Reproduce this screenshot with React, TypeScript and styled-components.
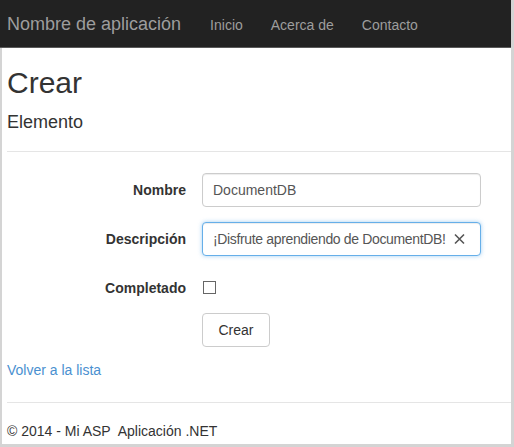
import React from 'react';
import styled, { createGlobalStyle } from 'styled-components';

const GlobalStyle = createGlobalStyle`
  html, body {
    margin: 0;
    padding: 0;
    background: #fff;
  }
  body {
    font-family: Arial, "Liberation Sans", sans-serif;
    font-size: 14px;
    color: #333;
  }
`;

const Frame = styled.div`
  width: 514px;
  height: 447px;
  box-sizing: border-box;
  border-right: 3px solid #d4d4d4;
  border-bottom: 3px solid #d4d4d4;
  display: flex;
  flex-direction: column;
  overflow: hidden;
`;

const Navbar = styled.nav`
  height: 48px;
  flex-shrink: 0;
  background: #222;
  border-bottom: 1px solid #5a5a5a;
  display: flex;
  align-items: center;
  padding: 2px 0 0 7px;
  box-sizing: border-box;
`;

const Brand = styled.a`
  font-size: 18px;
  color: #9d9d9d;
  text-decoration: none;
  padding-right: 15px;
`;

const NavLink = styled.a`
  font-size: 14px;
  color: #9d9d9d;
  text-decoration: none;
  padding: 0 14px;
`;

const Body = styled.div`
  flex: 1;
  border-left: 2px solid #d4d4d4;
  padding: 0 0 0 5px;
`;

const Title = styled.h2`
  font-size: 30px;
  font-weight: 400;
  line-height: 33px;
  margin: 18px 0 0;
`;

const Subtitle = styled.h4`
  font-size: 18px;
  font-weight: 400;
  line-height: 20px;
  margin: 13px 0 0;
`;

const Rule = styled.hr<{ $top: number }>`
  border: 0;
  border-top: 1px solid #e5e5e5;
  margin: ${p => p.$top}px 0 0;
`;

const Form = styled.form`
  display: grid;
  grid-template-columns: 179px 279px;
  column-gap: 16px;
  row-gap: 15px;
  align-items: center;
  margin-top: 21px;
`;

const Label = styled.label`
  font-weight: 700;
  text-align: right;
`;

const InputWrap = styled.div`
  position: relative;
`;

const Input = styled.input<{ $focused?: boolean }>`
  box-sizing: border-box;
  width: 100%;
  height: 34px;
  padding: 6px 30px 6px 10px;
  font-family: inherit;
  font-size: 14px;
  color: #555;
  letter-spacing: ${p => (p.$focused ? '-0.35px' : '0')};
  border: 1px solid ${p => (p.$focused ? '#66afe9' : '#ccc')};
  border-radius: 4px;
  box-shadow: ${p =>
    p.$focused
      ? 'inset 0 1px 1px rgba(0,0,0,.075), 0 0 4px rgba(102,175,233,.6)'
      : 'inset 0 1px 1px rgba(0,0,0,.075)'};
  outline: none;
`;

const Clear = styled.span`
  position: absolute;
  right: 16px;
  top: 50%;
  transform: translateY(-50%);
  display: flex;
`;

const CheckRow = styled.div`
  height: 33px;
  display: flex;
  align-items: center;
  padding-left: 1px;
`;

const Checkbox = styled.span`
  width: 11px;
  height: 11px;
  border: 1px solid #666;
`;

const ButtonCell = styled.div`
  grid-column: 2;
  margin-top: -6px;
`;

const Button = styled.button`
  height: 34px;
  padding: 0 12px;
  width: 68px;
  background: #fff;
  border: 1px solid #ccc;
  border-radius: 4px;
  font-family: inherit;
  font-size: 14px;
  color: #333;
`;

const BackLink = styled.a`
  display: block;
  margin-top: 15px;
  color: #4a90d0;
  text-decoration: none;
`;

const Footer = styled.footer`
  margin-top: 20px;
`;

const App: React.FC = () => {
  return (
    <>
      <GlobalStyle />
      <Frame>
        <Navbar>
          <Brand href="#">Nombre de aplicación</Brand>
          <NavLink href="#">Inicio</NavLink>
          <NavLink href="#">Acerca de</NavLink>
          <NavLink href="#">Contacto</NavLink>
        </Navbar>
        <Body>
          <Title>Crear</Title>
          <Subtitle>Elemento</Subtitle>
          <Rule $top={19} />
          <Form>
            <Label>Nombre</Label>
            <Input defaultValue="DocumentDB" />

            <Label>Descripción</Label>
            <InputWrap>
              <Input $focused defaultValue="¡Disfrute aprendiendo de DocumentDB!" />
              <Clear>
                <svg width="11" height="11" viewBox="0 0 11 11">
                  <path d="M1 1L10 10M10 1L1 10" stroke="#555" strokeWidth="1.6" />
                </svg>
              </Clear>
            </InputWrap>

            <Label>Completado</Label>
            <CheckRow>
              <Checkbox />
            </CheckRow>

            <ButtonCell>
              <Button type="button">Crear</Button>
            </ButtonCell>
          </Form>
          <BackLink href="#">Volver a la lista</BackLink>
          <Rule $top={24} />
          <Footer>© 2014 - Mi ASP&nbsp; Aplicación .NET</Footer>
        </Body>
      </Frame>
    </>
  );
};

export default App;
